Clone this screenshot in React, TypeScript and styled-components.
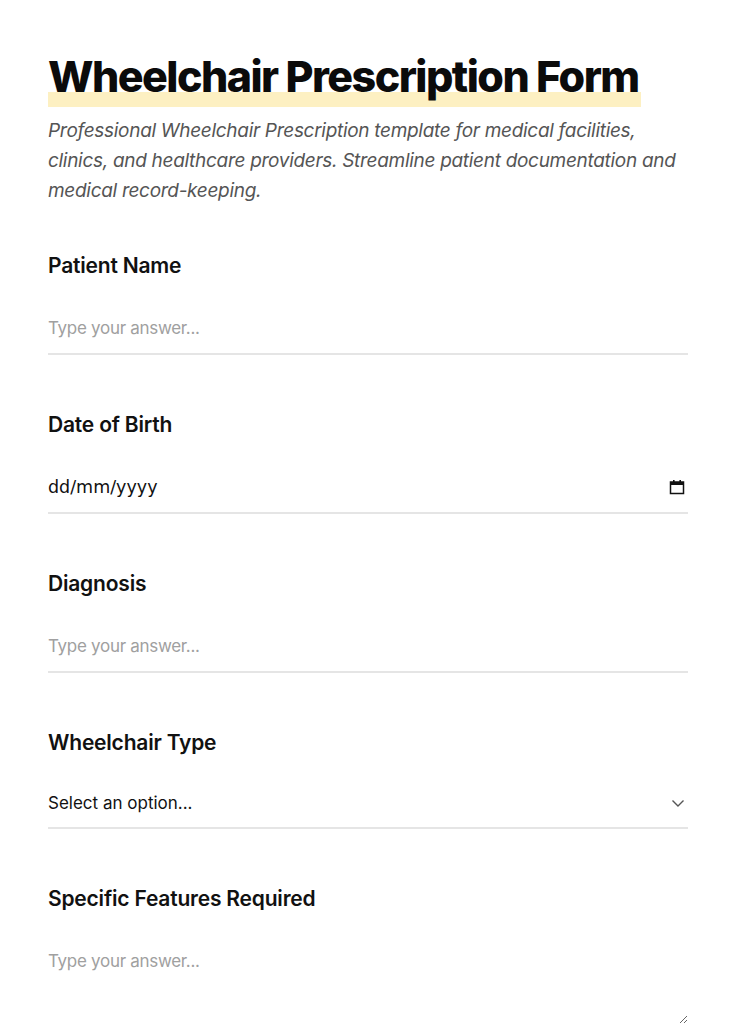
import React from 'react'
import styled, { createGlobalStyle } from 'styled-components'

const Global = createGlobalStyle`
  body {
    margin: 0;
    background: #fff;
    font-family: Inter, "Open Sans", sans-serif;
    color: #111;
  }
`

const App = () => {
  return (
    <>
      <Global />
      <Page>
        <Header>
          <Title><Mark>Wheelchair Prescription Form</Mark></Title>
          <Desc>
            Professional Wheelchair Prescription template for medical facilities, clinics, and
            healthcare providers. Streamline patient documentation and medical record-keeping.
          </Desc>
        </Header>

        <Field>
          <Label>Patient Name</Label>
          <TextInput placeholder="Type your answer..." />
        </Field>

        <Field>
          <Label>Date of Birth</Label>
          <DateRow>
            <DateText>dd/mm/yyyy</DateText>
            <svg width="16" height="16" viewBox="0 0 16 16" fill="none">
              <rect x="1.5" y="3" width="13" height="11.5" stroke="#111" strokeWidth="1.5" />
              <rect x="1.5" y="3" width="13" height="3" fill="#111" />
              <rect x="4" y="1" width="1.6" height="3" fill="#111" />
              <rect x="10.4" y="1" width="1.6" height="3" fill="#111" />
            </svg>
          </DateRow>
        </Field>

        <Field>
          <Label>Diagnosis</Label>
          <TextInput placeholder="Type your answer..." />
        </Field>

        <Field>
          <Label>Wheelchair Type</Label>
          <SelectRow>
            <span>Select an option...</span>
            <svg width="16" height="16" viewBox="0 0 16 16" fill="none">
              <path d="M2.5 5.5l5.5 5.5 5.5-5.5" stroke="#555" strokeWidth="1.4" />
            </svg>
          </SelectRow>
        </Field>

        <Field>
          <Label>Specific Features Required</Label>
          <Area placeholder="Type your answer..." />
        </Field>
      </Page>
    </>
  )
}

export default App

const Page = styled.div`
  width: 640px;
  margin: 0 auto;
  padding-top: 50px;
  display: flex;
  flex-direction: column;
`
const Header = styled.div`
  margin-bottom: 46px;
`
const Title = styled.h1`
  margin: 0;
  font-size: 43px;
  font-weight: 800;
  letter-spacing: -1.55px;
  line-height: 52px;
  color: #0b0b0b;
`
const Mark = styled.span`
  background: linear-gradient(to bottom, transparent 0, transparent 74%, #fdf0c2 74%, #fdf0c2 100%);
  padding: 0 2px 5px 0;
`
const Desc = styled.p`
  margin: 14px 0 0;
  font-size: 19px;
  font-style: italic;
  line-height: 30px;
  color: #555;
  letter-spacing: -0.3px;
`
const Field = styled.div`
  display: flex;
  flex-direction: column;
  margin-bottom: 56px;
`
const Label = styled.label`
  font-size: 21px;
  font-weight: 600;
  letter-spacing: -0.2px;
  line-height: 28px;
  color: #111;
  margin-bottom: 35px;
`
const TextInput = styled.input`
  border: none;
  border-bottom: 2px solid #e5e5e5;
  padding: 0 0 12px;
  font-family: inherit;
  font-size: 17px;
  letter-spacing: -0.3px;
  line-height: 26px;
  outline: none;
  &::placeholder {
    color: #a0a0a0;
  }
`
const DateRow = styled.div`
  display: flex;
  justify-content: space-between;
  align-items: center;
  border-bottom: 2px solid #e5e5e5;
  padding: 0 3px 12px 0;
  line-height: 26px;
`
const DateText = styled.span`
  font-family: "DejaVu Sans", sans-serif;
  font-size: 17.5px;
  color: #111;
`
const SelectRow = styled.div`
  display: flex;
  justify-content: space-between;
  align-items: center;
  border-bottom: 2px solid #e5e5e5;
  padding: 0 2px 11px 0;
  font-size: 17px;
  line-height: 26px;
  color: #111;
  margin-top: -2px;
`
const Area = styled.textarea`
  border: none;
  border-bottom: 2px solid #e5e5e5;
  padding: 0;
  font-family: inherit;
  font-size: 17px;
  letter-spacing: -0.3px;
  line-height: 26px;
  height: 76px;
  outline: none;
  &::placeholder {
    color: #a0a0a0;
  }
`
